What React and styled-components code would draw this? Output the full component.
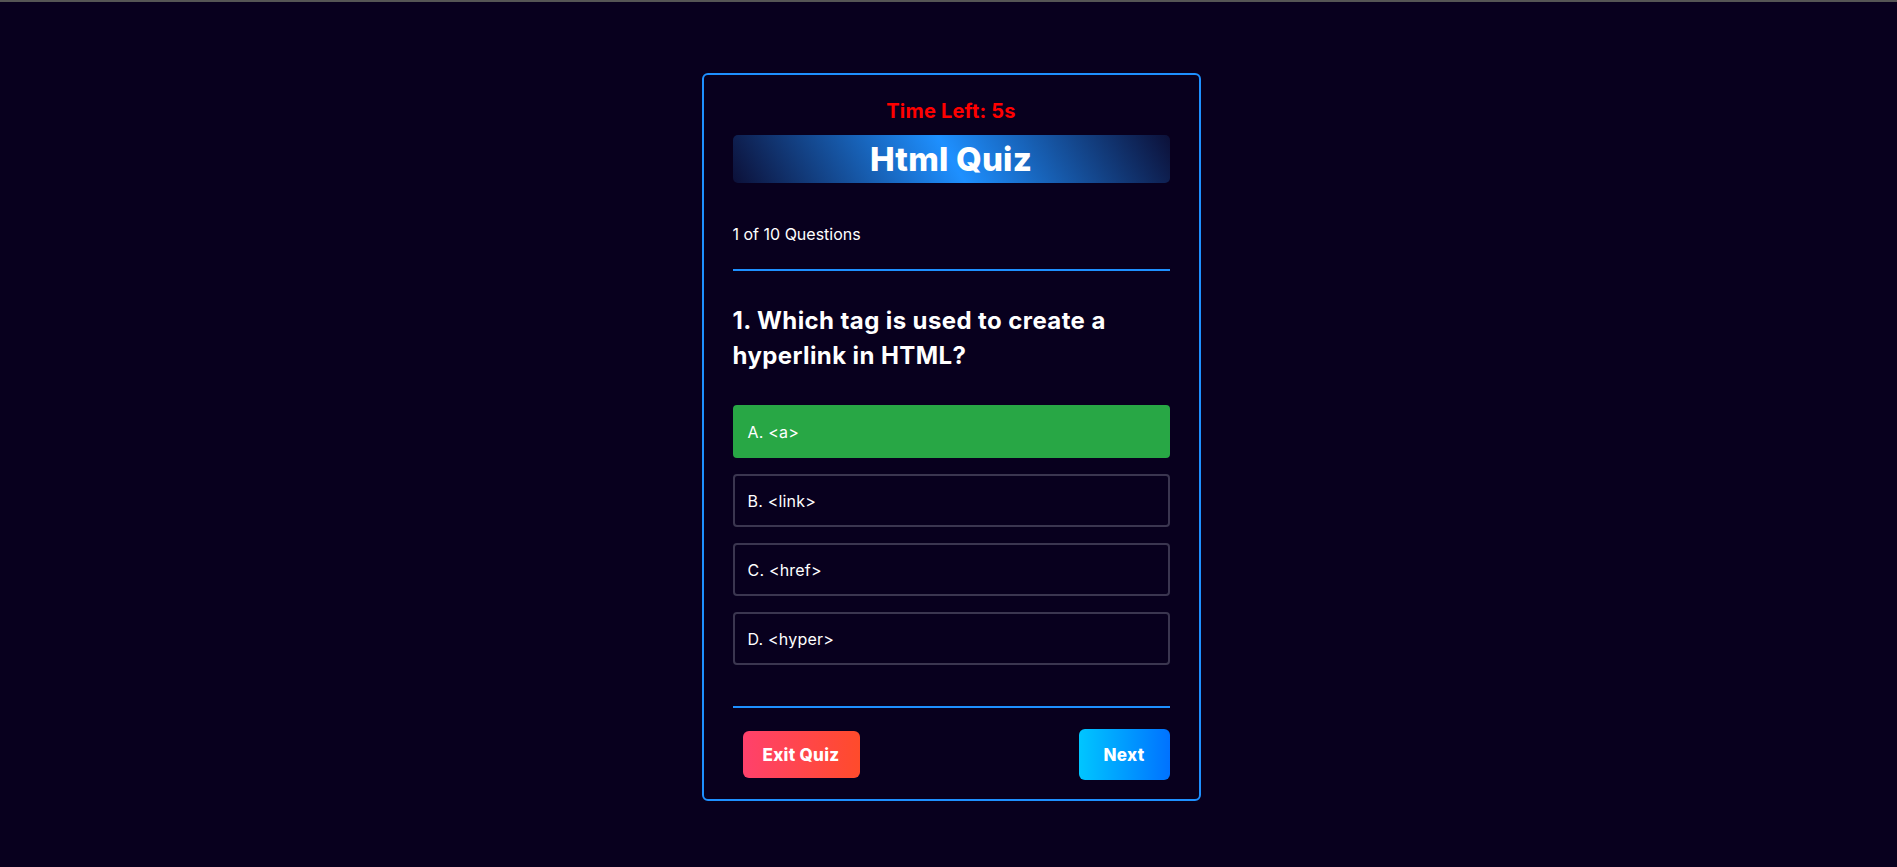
import React from "react";
import styled, { createGlobalStyle } from "styled-components";

const GlobalStyle = createGlobalStyle`
  * {
    box-sizing: border-box;
  }
  body {
    margin: 0;
    background: #08001e;
    font-family: Inter, "Open Sans", sans-serif;
    color: #fff;
    border-top: 2px solid #555;
  }
`;

const Page = styled.div`
  min-height: 865px;
  display: flex;
  justify-content: center;
  align-items: flex-start;
  padding: 71px 0 0 5px;
`;

const Card = styled.div`
  width: 499px;
  border: 2px solid #1e90ff;
  border-radius: 6px;
  padding: 22px 29px 19px;
  display: flex;
  flex-direction: column;
`;

const Timer = styled.div`
  color: #ff0000;
  font-weight: 700;
  font-size: 20px;
  line-height: 28px;
  text-align: center;
  letter-spacing: 0.2px;
`;

const Banner = styled.h1`
  margin: 10px 0 0;
  height: 48px;
  border-radius: 5px;
  background: linear-gradient(60deg, #0c1038 0%, #1e90ff 50%, #0c1038 100%);
  font-size: 33px;
  font-weight: 800;
  line-height: 48px;
  text-align: center;
  letter-spacing: 0.2px;
`;

const Counter = styled.p`
  margin: 40px 0 0;
  font-size: 16px;
  line-height: 22px;
`;

const Divider = styled.hr`
  margin: ${({ $top }) => $top}px 0 0;
  border: none;
  height: 2px;
  background: #1e90ff;
`;

const Question = styled.h2`
  margin: 32px 0 0;
  font-size: 24px;
  font-weight: 700;
  line-height: 35px;
  letter-spacing: 0.4px;
`;

const Options = styled.ul`
  list-style: none;
  margin: 32px 0 0;
  padding: 0;
  display: flex;
  flex-direction: column;
  gap: 16px;
`;

const Option = styled.li`
  height: 53px;
  display: flex;
  align-items: center;
  padding: 0 13px;
  border: 2px solid ${({ $correct }) => ($correct ? "#28a745" : "#3b3650")};
  border-radius: 4px;
  background: ${({ $correct }) => ($correct ? "#28a745" : "transparent")};
  font-size: 16px;
  letter-spacing: 0.2px;
`;

const Footer = styled.div`
  margin-top: 21px;
  display: flex;
  justify-content: space-between;
  align-items: center;
`;

const Button = styled.button`
  border: none;
  color: #fff;
  font-family: inherit;
  font-weight: 800;
  font-size: 17px;
  letter-spacing: 0.3px;
  border-radius: 6px;
  cursor: pointer;
`;

const ExitButton = styled(Button)`
  margin-left: 10px;
  width: 117px;
  height: 47px;
  background: linear-gradient(90deg, #ff416c, #ff4b2b);
`;

const NextButton = styled(Button)`
  width: 91px;
  height: 51px;
  background: linear-gradient(90deg, #00c6ff, #0072ff);
`;

const options = ["A. <a>", "B. <link>", "C. <href>", "D. <hyper>"];

export default function App() {
  return (
    <>
      <GlobalStyle />
      <Page>
        <Card>
          <Timer>Time Left: 5s</Timer>
          <Banner>Html Quiz</Banner>
          <Counter>1 of 10 Questions</Counter>
          <Divider $top={24} />
          <Question>
            1. Which tag is used to create a<br />
            hyperlink in HTML?
          </Question>
          <Options>
            {options.map((o, i) => (
              <Option key={o} $correct={i === 0}>
                {o}
              </Option>
            ))}
          </Options>
          <Divider $top={41} />
          <Footer>
            <ExitButton>Exit Quiz</ExitButton>
            <NextButton>Next</NextButton>
          </Footer>
        </Card>
      </Page>
    </>
  );
}
